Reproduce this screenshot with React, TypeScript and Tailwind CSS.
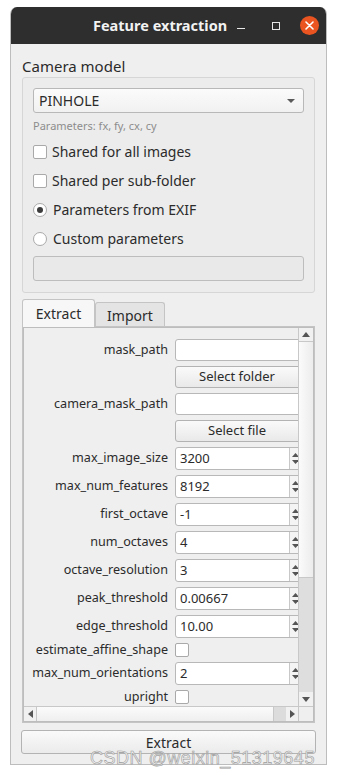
import React from "react";

const font = { fontFamily: '"Noto Sans", "DejaVu Sans", sans-serif' };

const CheckRow = ({ label }: { label: string }) => (
  <div className="flex h-[29px] items-center">
    <span className="h-[14px] w-[14px] rounded-[2px] border border-[#a9a9a9] bg-white" />
    <span className="ml-[5px] text-[14px] text-[#2b2b2b]">{label}</span>
  </div>
);

const RadioRow = ({ label, checked }: { label: string; checked?: boolean }) => (
  <div className="flex h-[29px] items-center">
    <span className="grid h-[14px] w-[14px] place-items-center rounded-full border border-[#a9a9a9] bg-white">
      {checked && <span className="h-[6px] w-[6px] rounded-full bg-[#3c3c3c]" />}
    </span>
    <span className="ml-[6px] text-[14px] text-[#2b2b2b]">{label}</span>
  </div>
);

const Label = ({ children }: { children: React.ReactNode }) => (
  <div className="w-[144px] shrink-0 text-right text-[12.6px] whitespace-nowrap text-[#2b2b2b]">{children}</div>
);

const TextField = ({ value = "" }: { value?: string }) => (
  <div className="ml-[7px] flex h-[22px] w-[140px] shrink-0 items-center rounded-[3px] border border-[#b8b8b8] bg-white pl-[4px] text-[13px] text-[#2b2b2b]">
    {value}
  </div>
);

const Button = ({ label }: { label: string }) => (
  <div className="ml-[151px] flex h-[22px] w-[140px] shrink-0 items-center justify-center rounded-[3px] border border-[#b3b3b3] bg-gradient-to-b from-[#fafafa] to-[#e9e9e9] pr-[16px] text-[13px] text-[#2b2b2b]">
    {label}
  </div>
);

const SpinField = ({ value }: { value: string }) => (
  <div className="ml-[7px] flex h-[23px] w-[140px] shrink-0 items-center rounded-[3px] border border-[#b8b8b8] bg-white text-[13px] text-[#2b2b2b]">
    <span className="w-[113px] pl-[4px]">{value}</span>
    <div className="flex h-full w-[12px] flex-col items-center justify-center gap-[3px] border-l border-[#c8c8c8] bg-[#f4f4f4]">
      <svg width="7" height="4" viewBox="0 0 7 4">
        <path d="M0 4 L3.5 0 L7 4 Z" fill="#555" />
      </svg>
      <svg width="7" height="4" viewBox="0 0 7 4">
        <path d="M0 0 L3.5 4 L7 0 Z" fill="#555" />
      </svg>
    </div>
  </div>
);

const Row = ({ children, className = "" }: { children: React.ReactNode; className?: string }) => (
  <div className={`flex shrink-0 items-center ${className}`}>{children}</div>
);

const spins: [string, string][] = [
  ["max_image_size", "3200"],
  ["max_num_features", "8192"],
  ["first_octave", "-1"],
  ["num_octaves", "4"],
  ["octave_resolution", "3"],
  ["peak_threshold", "0.00667"],
  ["edge_threshold", "10.00"],
];

const Tri = ({ dir }: { dir: "up" | "down" | "left" | "right" }) => {
  const d = {
    up: "M0 5 L4 0 L8 5 Z",
    down: "M0 0 L4 5 L8 0 Z",
    left: "M5 0 L0 4 L5 8 Z",
    right: "M0 0 L5 4 L0 8 Z",
  }[dir];
  const vert = dir === "up" || dir === "down";
  return (
    <svg width={vert ? 8 : 5} height={vert ? 5 : 8} viewBox={vert ? "0 0 8 5" : "0 0 5 8"}>
      <path d={d} fill="#555" />
    </svg>
  );
};

const SmallBox = () => (
  <span className="ml-[7px] h-[14px] w-[14px] shrink-0 rounded-[2px] border border-[#a9a9a9] bg-white" />
);

export default function App() {
  return (
    <div className="relative h-[775px] w-[337px] overflow-hidden bg-white pl-[10px] pt-[7px]" style={font}>
      <div className="flex h-[758px] w-[317px] flex-col overflow-hidden rounded-t-[7px] border-x border-b border-[#bdbdbd] bg-[#efefef]">
        {/* title bar */}
        <div className="flex h-[37px] shrink-0 items-center bg-[#2e2e2e]">
          <span className="ml-[82px] w-[144px] text-[14.5px] font-bold whitespace-nowrap text-[#f2f2f2]">
            Feature extraction
          </span>
          <span className="h-[1px] w-[8px] translate-y-[3px] bg-[#e8e8e8]" />
          <span className="ml-[27px] h-[8px] w-[8px] border border-[#e8e8e8]" />
          <span className="ml-[20px] grid h-[19px] w-[19px] place-items-center rounded-full bg-[#e95420]">
            <svg width="9" height="9" viewBox="0 0 9 9">
              <path d="M1 1 L8 8 M8 1 L1 8" stroke="#fff" strokeWidth="1.6" strokeLinecap="round" />
            </svg>
          </span>
        </div>

        <div className="flex flex-1 flex-col px-[11px]">
          <div className="mt-[12px] h-[21px] text-[15px] leading-[21px] text-[#2b2b2b]">Camera model</div>

          {/* group box */}
          <div className="h-[216px] rounded-[3px] border border-[#d6d6d6] bg-[#ececec] px-[10px] pt-[10px]">
            <div className="flex h-[25px] items-center justify-between rounded-[3px] border border-[#b8b8b8] bg-gradient-to-b from-[#fbfbfb] to-[#f1f1f1] pl-[5px] pr-[8px]">
              <span className="text-[14px] text-[#2b2b2b]">PINHOLE</span>
              <svg width="8" height="4" viewBox="0 0 8 4">
                <path d="M0 0 L4 4 L8 0 Z" fill="#5a5a5a" />
              </svg>
            </div>
            <div className="mt-[5px] text-[11px] leading-[16px] text-[#8c8c8c]">Parameters: fx, fy, cx, cy</div>
            <div className="mt-[3px]">
              <CheckRow label="Shared for all images" />
              <CheckRow label="Shared per sub-folder" />
              <RadioRow label="Parameters from EXIF" checked />
              <RadioRow label="Custom parameters" />
            </div>
            <div className="mt-[3px] h-[25px] rounded-[3px] border border-[#bdbdbd] bg-[#e9e9e9]" />
          </div>

          {/* tabs */}
          <div className="mt-[6px] flex h-[28px] items-end">
            <div className="z-10 flex h-[28px] w-[73px] items-center justify-center rounded-t-[3px] border border-b-0 border-[#c4c4c4] bg-[#f7f7f7] text-[14px] text-[#2b2b2b]">
              Extract
            </div>
            <div className="flex h-[25px] w-[70px] items-center justify-center rounded-t-[3px] border border-b-0 border-[#c4c4c4] bg-[#e4e4e4] text-[14px] text-[#2b2b2b]">
              Import
            </div>
          </div>

          {/* tab pane */}
          <div className="-mt-[1px] flex h-[397px] flex-col border border-[#c4c4c4] bg-[#efefef]">
            <div className="flex h-[395px] border border-[#bdbdbd]">
              <div className="flex min-w-0 flex-1 flex-col overflow-hidden">
                <div className="flex h-[378px] flex-col gap-[5px] overflow-hidden pt-[11px]">
                  <Row>
                    <Label>mask_path</Label>
                    <TextField />
                  </Row>
                  <Row>
                    <Button label="Select folder" />
                  </Row>
                  <Row>
                    <Label>camera_mask_path</Label>
                    <TextField />
                  </Row>
                  <Row>
                    <Button label="Select file" />
                  </Row>
                  {spins.map(([l, v]) => (
                    <Row key={l}>
                      <Label>{l}</Label>
                      <SpinField value={v} />
                    </Row>
                  ))}
                  <Row className="h-[14px]">
                    <Label>estimate_affine_shape</Label>
                    <SmallBox />
                  </Row>
                  <Row>
                    <Label>max_num_orientations</Label>
                    <SpinField value="2" />
                  </Row>
                  <Row className="h-[14px]">
                    <Label>upright</Label>
                    <SmallBox />
                  </Row>
                </div>
                {/* horizontal scrollbar */}
                <div className="flex h-[15px] shrink-0 items-center border-t border-[#c8c8c8] bg-[#f1f1f1]">
                  <div className="grid w-[12px] place-items-center">
                    <Tri dir="left" />
                  </div>
                  <div className="h-[14px] w-[238px] border-x border-[#c8c8c8] bg-gradient-to-b from-[#fbfbfb] to-[#efefef]" />
                  <div className="h-[14px] w-[12px] bg-[#dcdcdc]" />
                  <div className="grid flex-1 place-items-center">
                    <Tri dir="right" />
                  </div>
                </div>
              </div>
              {/* vertical scrollbar */}
              <div className="flex w-[15px] shrink-0 flex-col border-l border-[#c8c8c8] bg-[#f1f1f1]">
                <div className="grid h-[14px] place-items-center border-b border-[#c8c8c8]">
                  <Tri dir="up" />
                </div>
                <div className="h-[235px] bg-gradient-to-r from-[#fbfbfb] to-[#ececec]" />
                <div className="h-[115px] border-t border-[#c8c8c8] bg-[#dedede]" />
                <div className="grid h-[14px] place-items-center">
                  <Tri dir="down" />
                </div>
                <div className="h-[15px] border-t border-[#c8c8c8] bg-[#efefef]" />
              </div>
            </div>
          </div>

          <div className="-mx-[1px] mt-[7px] flex h-[24px] items-center justify-center rounded-[3px] border border-[#b3b3b3] bg-gradient-to-b from-[#fafafa] to-[#ebebeb] text-[14px] text-[#2b2b2b]">
            Extract
          </div>
        </div>
      </div>

      <div
        className="absolute left-[90px] top-[745px] text-[18px] tracking-[0.5px] text-[#f4f4f4]"
        style={{ fontFamily: '"Liberation Sans", Arial, sans-serif', WebkitTextStroke: "0.6px #9a9a9a" }}
      >
        CSDN @weixin_51319645
      </div>
    </div>
  );
}
